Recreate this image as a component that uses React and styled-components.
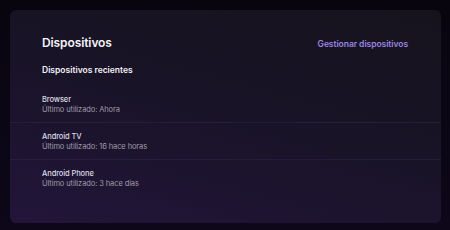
import React from "react";
import styled, { createGlobalStyle } from "styled-components";

const Global = createGlobalStyle`
  html, body { margin: 0; padding: 0; background: #0a0614; }
  body { width: 450px; height: 230px; overflow: hidden; font-family: Inter, "Noto Sans", sans-serif; }
`;

const Page = styled.div`
  width: 450px;
  height: 230px;
  box-sizing: border-box;
  padding: 10px 9px 7px 10px;
  background: linear-gradient(180deg, #08050f 0%, #0d0719 100%);
`;

const Card = styled.section`
  height: 100%;
  box-sizing: border-box;
  border-radius: 6px;
  background: linear-gradient(195deg, #16131d 0%, #181326 45%, #22153a 100%);
  padding: 25px 0 0 0;
  display: flex;
  flex-direction: column;
`;

const Header = styled.div`
  display: flex;
  justify-content: space-between;
  align-items: center;
  padding: 0 33px 0 32px;
  height: 16px;
`;

const Title = styled.h1`
  margin: 0;
  font-size: 12px;
  font-weight: 600;
  letter-spacing: -0.1px;
  color: #f6f4fa;
  line-height: 16px;
`;

const Link = styled.a`
  font-size: 8.5px;
  font-weight: 600;
  letter-spacing: -0.05px;
  color: #9985e4;
  line-height: 12px;
  text-decoration: none;
  margin-top: 2px;
`;

const Subtitle = styled.h2`
  margin: 13px 0 0 0;
  padding: 0 32px;
  font-size: 8.5px;
  font-weight: 600;
  color: #f3f1f7;
  line-height: 12px;
`;

const List = styled.div`
  margin-top: 10px;
  display: flex;
  flex-direction: column;
`;

const Row = styled.div`
  padding: 9px 32px 7px;
  border-bottom: ${(p) => (p.$last ? "none" : "1px solid rgba(150, 120, 200, 0.1)")};
`;

const Name = styled.div`
  font-size: 7.5px;
  color: #dedbe5;
  line-height: 10px;
  font-weight: 500;
  letter-spacing: -0.1px;
`;

const Meta = styled.div`
  font-size: 7.5px;
  color: #a09ba9;
  line-height: 10px;
  letter-spacing: -0.1px;
`;

const devices = [
  { name: "Browser", meta: "Último utilizado: Ahora" },
  { name: "Android TV", meta: "Último utilizado: 16 hace horas" },
  { name: "Android Phone", meta: "Último utilizado: 3 hace días" },
];

export default function App() {
  return (
    <>
      <Global />
      <Page>
        <Card>
          <Header>
            <Title>Dispositivos</Title>
            <Link href="#">Gestionar dispositivos</Link>
          </Header>
          <Subtitle>Dispositivos recientes</Subtitle>
          <List>
            {devices.map((d, i) => (
              <Row key={d.name} $last={i === devices.length - 1}>
                <Name>{d.name}</Name>
                <Meta>{d.meta}</Meta>
              </Row>
            ))}
          </List>
        </Card>
      </Page>
    </>
  );
}
